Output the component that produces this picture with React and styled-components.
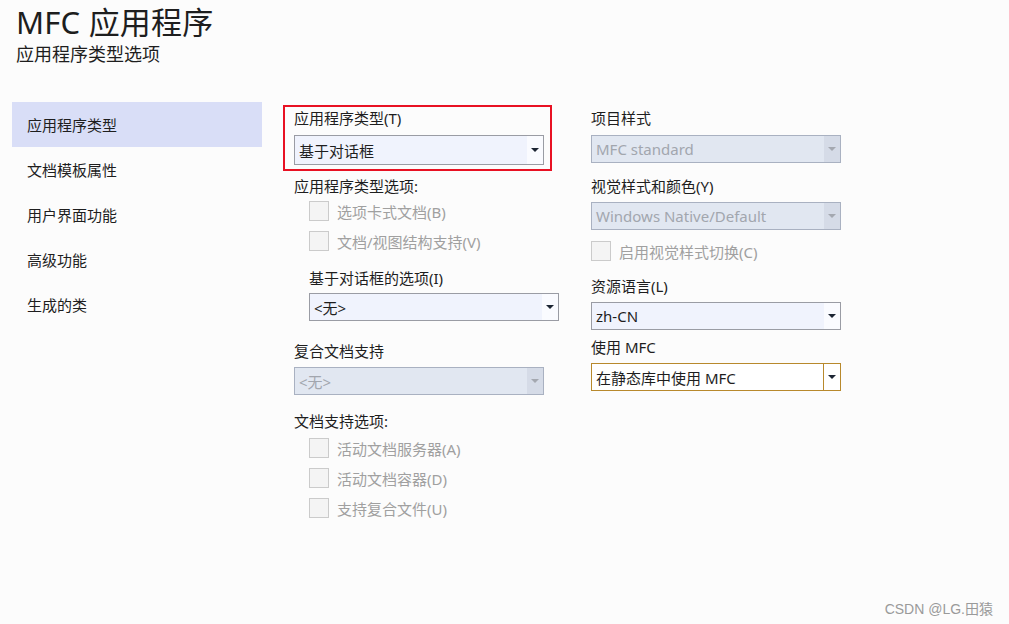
import React from 'react';
import styled, { createGlobalStyle } from 'styled-components';

const GlobalStyle = createGlobalStyle`
  html, body {
    margin: 0;
    padding: 0;
    background: #fcfcfc;
  }
  body {
    font-family: 'Noto Sans', 'Noto Sans CJK SC', sans-serif;
    color: #1e1e1e;
  }
`;

const Page = styled.div`
  position: relative;
  width: 1009px;
  height: 624px;
  overflow: hidden;
  background: #fcfcfc;
`;

const Header = styled.header`
  padding: 0 0 0 16px;
  height: 66px;
`;

const Title = styled.h1`
  margin: 0;
  padding-top: 4px;
  font-size: 31px;
  font-weight: 400;
  line-height: 36px;
  letter-spacing: 0.2px;
`;

const Subtitle = styled.h2`
  margin: 0;
  padding-top: 3px;
  font-size: 18px;
  font-weight: 400;
  line-height: 22px;
`;

const Body = styled.div`
  display: flex;
  margin-top: 36px;
`;

const Nav = styled.nav`
  width: 250px;
  margin-left: 12px;
  display: flex;
  flex-direction: column;
`;

const NavItem = styled.div`
  height: 45px;
  padding-left: 15px;
  display: flex;
  align-items: center;
  font-size: 15px;
  background: ${(p) => (p.$active ? '#d9def7' : 'transparent')};
`;

const Column = styled.div`
  width: ${(p) => p.$width}px;
  margin-left: ${(p) => p.$gap}px;
  padding-top: ${(p) => p.$pt}px;
  display: flex;
  flex-direction: column;
`;

const Highlight = styled.div`
  border: 2px solid #e81123;
  padding: 1px 6px 4px 9px;
  display: flex;
  flex-direction: column;
`;

const Label = styled.div`
  height: 20px;
  line-height: 20px;
  font-size: 15px;
  margin-top: ${(p) => p.$mt || 0}px;
  padding-left: ${(p) => p.$indent || 0}px;
  white-space: nowrap;
`;

const Combo = styled.div`
  display: flex;
  flex-shrink: 0;
  height: ${(p) => p.$h || 28}px;
  width: 250px;
  box-sizing: border-box;
  margin-top: ${(p) => p.$mt || 0}px;
  margin-left: ${(p) => p.$indent || 0}px;
  border: 1px solid
    ${(p) => (p.$variant === 'gold' ? '#b8892c' : p.$variant === 'disabled' ? '#a9b1c1' : '#9a9ca4')};
  background: ${(p) =>
    p.$variant === 'gold' ? '#ffffff' : p.$variant === 'disabled' ? '#e1e7f1' : '#f0f3fd'};
  color: ${(p) => (p.$variant === 'disabled' ? '#a2a6ae' : '#1e1e1e')};
  font-size: 15px;
`;

const ComboText = styled.div`
  flex: 1;
  padding-left: 4px;
  display: flex;
  align-items: center;
  white-space: nowrap;
  overflow: hidden;
`;

const ComboButton = styled.div`
  width: 16px;
  display: flex;
  align-items: center;
  justify-content: center;
  border-left: ${(p) => (p.$variant === 'gold' ? '1px solid #b8892c' : 'none')};
  background: ${(p) =>
    p.$variant === 'gold' ? '#ffffff' : p.$variant === 'disabled' ? '#d5dbe7' : '#fafbff'};
`;

const Arrow = styled.span`
  width: 0;
  height: 0;
  border-left: 4px solid transparent;
  border-right: 4px solid transparent;
  border-top: 4px solid ${(p) => (p.$variant === 'disabled' ? '#a4a8b0' : '#1c2533')};
`;

const CheckRow = styled.div`
  height: 30px;
  display: flex;
  align-items: center;
  gap: 8px;
  margin-top: ${(p) => p.$mt || 0}px;
  padding-left: ${(p) => p.$indent || 0}px;
  font-size: 15px;
  color: #a0a0a0;
  white-space: nowrap;
`;

const Box = styled.span`
  width: 20px;
  height: 20px;
  box-sizing: border-box;
  border: 1px solid #cbcbcb;
  background: #f4f4f4;
  flex-shrink: 0;
`;

const Watermark = styled.div`
  position: absolute;
  right: 16px;
  bottom: 6px;
  font-size: 14px;
  color: #9a9a9a;
  font-family: 'Liberation Sans', 'Noto Sans CJK SC', sans-serif;
`;

const ComboBox = ({ value, variant, ...rest }) => (
  <Combo $variant={variant} {...rest}>
    <ComboText>{value}</ComboText>
    <ComboButton $variant={variant}>
      <Arrow $variant={variant} />
    </ComboButton>
  </Combo>
);

const Check = ({ label, ...rest }) => (
  <CheckRow {...rest}>
    <Box />
    {label}
  </CheckRow>
);

const navItems = ['应用程序类型', '文档模板属性', '用户界面功能', '高级功能', '生成的类'];

export default function App() {
  return (
    <Page>
      <GlobalStyle />
      <Header>
        <Title>MFC 应用程序</Title>
        <Subtitle>应用程序类型选项</Subtitle>
      </Header>
      <Body>
        <Nav>
          {navItems.map((item, i) => (
            <NavItem key={item} $active={i === 0}>
              {item}
            </NavItem>
          ))}
        </Nav>

        <Column $width={269} $gap={21} $pt={3}>
          <Highlight>
            <Label>应用程序类型(T)</Label>
            <ComboBox value="基于对话框" $h={30} $mt={7} />
          </Highlight>
          <Label $mt={5} $indent={11}>应用程序类型选项:</Label>
          <Check $indent={26} label="选项卡式文档(B)" />
          <Check $indent={26} label="文档/视图结构支持(V)" />
          <Label $mt={12} $indent={26}>基于对话框的选项(I)</Label>
          <ComboBox value="<无>" $mt={5} $indent={26} />
          <Label $mt={20} $indent={11}>复合文档支持</Label>
          <ComboBox value="<无>" variant="disabled" $mt={6} $indent={11} />
          <Label $mt={16} $indent={11}>文档支持选项:</Label>
          <Check $mt={2} $indent={26} label="活动文档服务器(A)" />
          <Check $indent={26} label="活动文档容器(D)" />
          <Check $indent={26} label="支持复合文件(U)" />
        </Column>

        <Column $width={250} $gap={39} $pt={6}>
          <Label>项目样式</Label>
          <ComboBox value="MFC standard" variant="disabled" $mt={7} />
          <Label $mt={13}>视觉样式和颜色(Y)</Label>
          <ComboBox value="Windows Native/Default" variant="disabled" $mt={6} />
          <Check $mt={6} label="启用视觉样式切换(C)" />
          <Label $mt={10}>资源语言(L)</Label>
          <ComboBox value="zh-CN" $mt={6} />
          <Label $mt={7}>使用 MFC</Label>
          <ComboBox value="在静态库中使用 MFC" variant="gold" $mt={6} />
        </Column>
      </Body>
      <Watermark>CSDN @LG.田猿</Watermark>
    </Page>
  );
}
